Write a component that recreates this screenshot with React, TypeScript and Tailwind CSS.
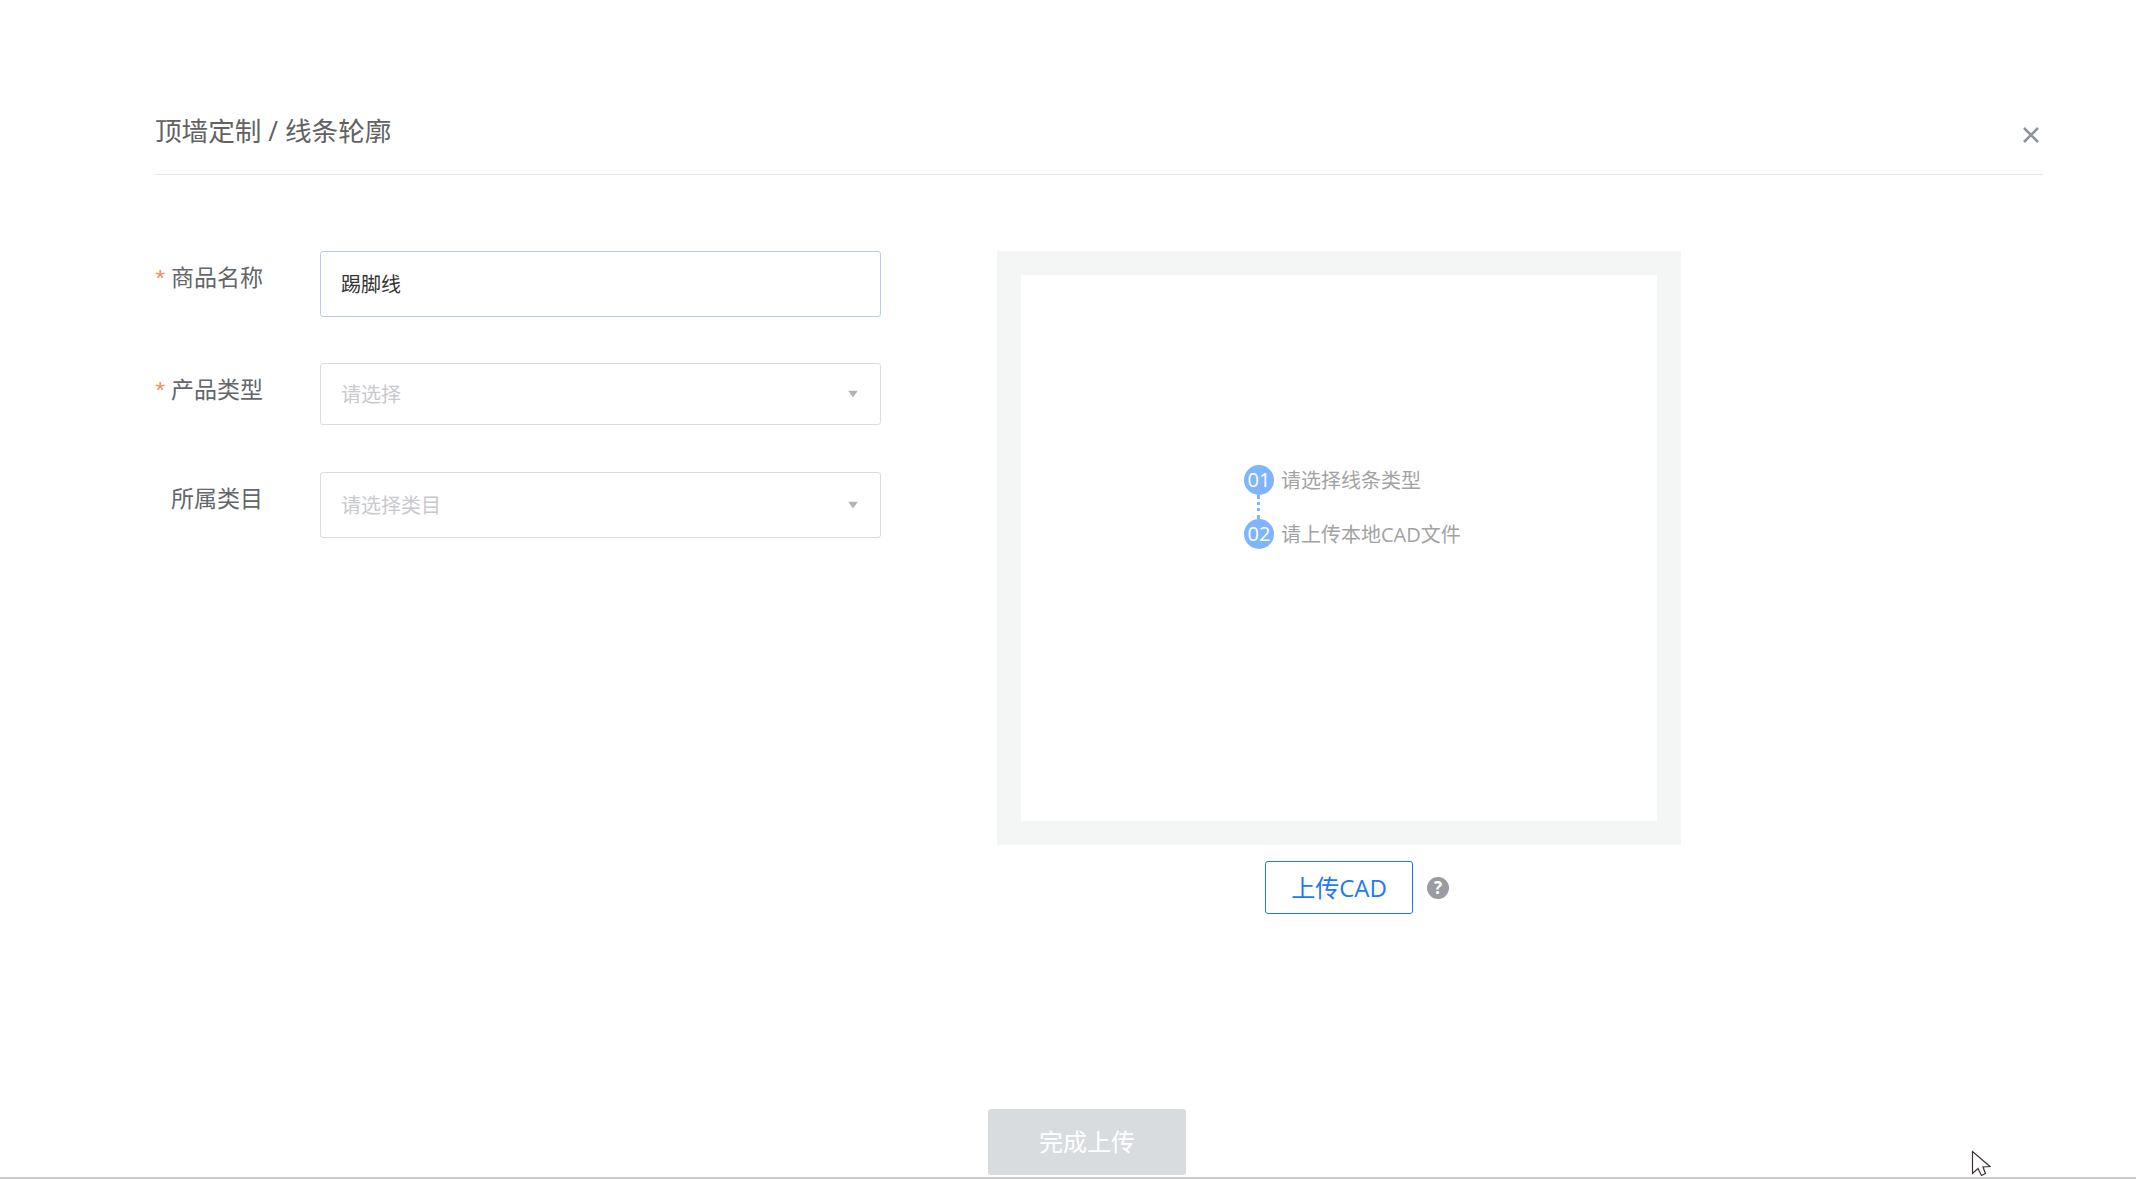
const font = "font-['Open_Sans','Noto_Sans_CJK_SC',sans-serif]";

function Caret() {
    return (
        <svg width="10" height="7" viewBox="0 0 10 7" className="absolute right-[22px] top-1/2 -translate-y-1/2">
            <path d="M0 0h10L5 7z" fill="#b4b4b4" />
        </svg>
    );
}

function Label({ text, required }: { text: string; required?: boolean }) {
    return (
        <div className="w-[165px] shrink-0 pt-[9px] flex text-[23px] leading-[34px] text-[#63666b]">
            <span className="w-[16px] text-[19px] text-[#f5894e]">{required ? "*" : ""}</span>
            <span>{text}</span>
        </div>
    );
}

function Select({ placeholder, height }: { placeholder: string; height: string }) {
    return (
        <div className={`relative w-[561px] ${height} flex items-center pl-[20px] pt-[2px] border border-[#dcdcdc] rounded-[3px] text-[20px] text-[#c8c9cc]`}>
            {placeholder}
            <Caret />
        </div>
    );
}

function Step({ num, text }: { num: string; text: string }) {
    return (
        <div className="flex items-center gap-[7px] h-[30px]">
            <span className="w-[30px] h-[30px] rounded-full bg-[#7fb4ff] text-white text-[20px] flex items-center justify-center">
                {num}
            </span>
            <span className="pt-[1px] text-[20px] text-[#a3a3a3]">{text}</span>
        </div>
    );
}

export default function App() {
    return (
        <div className={`relative w-[2136px] h-[1179px] overflow-hidden bg-white flex flex-col pl-[155px] pr-[93px] border-b-2 border-[#cccccc] ${font}`}>
            {/* Header */}
            <div className="h-[175px] pt-[112px] shrink-0 flex justify-between border-b border-[#e9eaec]">
                <h1 className="text-[26.600px] leading-[38px] text-[#626262]">顶墙定制 / 线条轮廓</h1>
                <svg width="18" height="18" viewBox="0 0 18 18" className="mt-[14px] mr-[3px]">
                    <path d="M2 2l14 14M16 2L2 16" stroke="#8e9299" strokeWidth="2.600" fill="none" />
                </svg>
            </div>

            <div className="flex mt-[76px]">
                {/* Form */}
                <div className="w-[726px] mr-[116px] shrink-0 flex flex-col">
                    <div className="flex">
                        <Label text="商品名称" required />
                        <div className="w-[561px] h-[66px] flex items-center pl-[20px] pt-[1px] border border-[#b9cbe8] rounded-[3px] text-[20px] text-[#333333]">
                            踢脚线
                        </div>
                    </div>
                    <div className="flex mt-[46px]">
                        <Label text="产品类型" required />
                        <Select placeholder="请选择" height="h-[62px]" />
                    </div>
                    <div className="flex mt-[47px]">
                        <Label text="所属类目" />
                        <Select placeholder="请选择类目" height="h-[66px]" />
                    </div>
                </div>

                {/* Preview */}
                <div className="w-[684px] shrink-0">
                    <div className="h-[594px] p-6 bg-[#f4f6f6]">
                        <div className="h-full bg-white pl-[223px] pt-[190px]">
                            <Step num="01" text="请选择线条类型" />
                            <div className="w-[3px] h-[24px] ml-[13px] border-l-[3px] border-dotted border-[#7fb4ff]" />
                            <Step num="02" text="请上传本地CAD文件" />
                        </div>
                    </div>
                    <div className="flex items-center gap-[14px] mt-[16px] pl-[268px]">
                        <button className="w-[148px] h-[53px] border border-[#1f78f5] rounded-[3px] text-[24px] text-[#1f78f5] bg-white">
                            上传CAD
                        </button>
                        <span className="w-[22px] h-[22px] rounded-full bg-[#9a9ca1] text-white text-[17px] font-bold flex items-center justify-center">
                            ?
                        </span>
                    </div>
                </div>
            </div>

            {/* Footer */}
            <div className="mt-auto mb-[2px] ml-[833px]">
                <button className="w-[198px] h-[66px] rounded-[3px] bg-[#d9dcdf] text-white text-[24px]">完成上传</button>
            </div>

            {/* Mouse pointer in the capture */}
            <svg width="20" height="28" viewBox="0 0 20 28" className="absolute left-[1971px] top-[1150px]">
                <path d="M1.500 1.500v22l5.500-5 3.500 7 4-2-2.500-6.500 7-.5z" fill="#ffffff" stroke="#3c2f35" strokeWidth="1.200" />
            </svg>
        </div>
    );
}
